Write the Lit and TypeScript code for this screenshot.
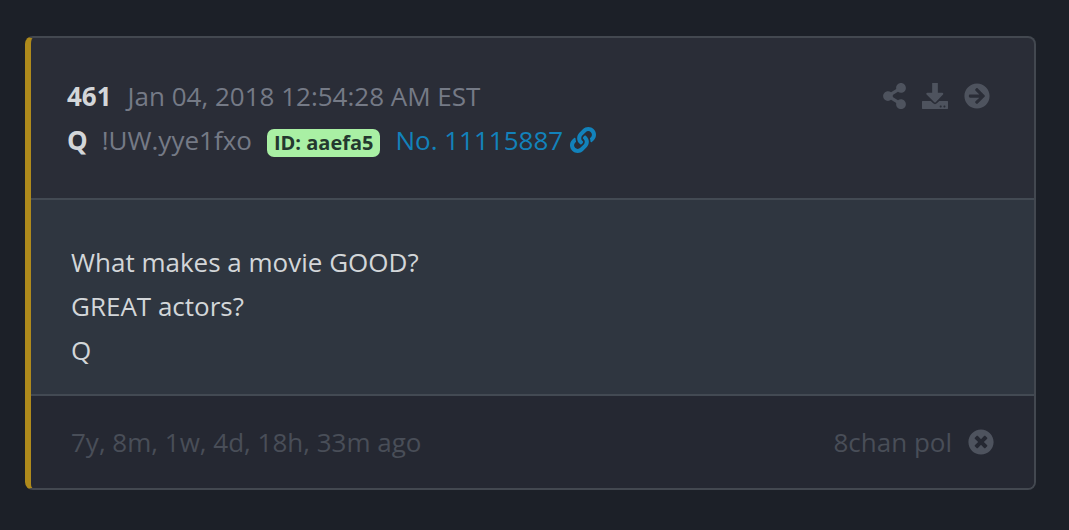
import { LitElement, html, css } from "lit";
import { customElement } from "lit/decorators.js";

@customElement("app-root")
export class AppRoot extends LitElement {
  static styles = css`
    :host {
      display: block;
      box-sizing: border-box;
      min-height: 100vh;
      padding: 36px 33px 40px 25px;
      background: #1c2028;
      font-family: "Open Sans", "Noto Sans", sans-serif;
      font-size: 26px;
      line-height: 44px;
      color: #d3d6d9;
    }
    .card {
      border: 2px solid #434850;
      border-left: 6px solid #ae8a1c;
      border-radius: 8px;
      overflow: hidden;
      background: #2a2d37;
    }
    header {
      display: flex;
      justify-content: space-between;
      padding: 36px 44px 36px 36px;
      border-bottom: 2px solid #434a53;
    }
    .row { display: flex; align-items: baseline; }
    .num { font-weight: 700; margin-right: 16px; }
    .name { font-weight: 700; margin-right: 14px; }
    .meta { color: #757a86; }
    .id {
      margin: 0 15px;
      padding: 0 7px;
      border-radius: 7px;
      background: #a9f0a4;
      color: #24382f;
      font-size: 20px;
      font-weight: 700;
      line-height: 28px;
    }
    a { color: #1282bb; text-decoration: none; display: flex; align-items: center; gap: 7px; }
    .tools { display: flex; gap: 16px; height: 44px; align-items: center; }
    button { display: flex; padding: 0; border: 0; background: none; color: #4e535e; }
    svg { fill: currentColor; display: block; }
    .body { padding: 40px 40px 22px; background: #2f3640; border-bottom: 2px solid #434a53; }
    p { margin: 0; }
    footer {
      display: flex;
      justify-content: space-between;
      padding: 24px 40px;
      background: #252832;
      color: #494e58;
    }
    .source { display: flex; align-items: center; gap: 16px; }
  `;

  render() {
    return html`
      <article class="card">
        <header>
          <div>
            <div class="row"><span class="num">461</span><time class="meta">Jan 04, 2018 12:54:28 AM EST</time></div>
            <div class="row">
              <span class="name">Q</span><span class="meta">!UW.yye1fxo</span><span class="id">ID: aaefa5</span>
              <a href="#11115887">No. 11115887
                <svg width="26" height="26" viewBox="0 0 512 512"><path d="M326.612 185.391c59.747 59.809 58.927 155.698.36 214.59-.11.12-.24.25-.36.37l-67.2 67.2c-59.27 59.27-155.699 59.262-214.96 0-59.27-59.26-59.27-155.7 0-214.96l37.106-37.106c9.84-9.84 26.786-3.3 27.294 10.606.648 17.722 3.826 35.527 9.69 52.721 1.986 5.822.567 12.262-3.783 16.612l-13.087 13.087c-28.026 28.026-28.905 73.66-1.155 101.96 28.024 28.579 74.086 28.749 102.325.51l67.2-67.19c28.191-28.191 28.073-73.757 0-101.83-3.701-3.694-7.429-6.564-10.341-8.569a16.037 16.037 0 0 1-6.947-12.606c-.396-10.567 3.348-21.456 11.698-29.806l21.054-21.055c5.521-5.521 14.182-6.199 20.584-1.731a152.482 152.482 0 0 1 20.522 17.197zM467.547 44.449c-59.261-59.262-155.69-59.27-214.96 0l-67.2 67.2c-.12.12-.25.25-.36.37-58.566 58.892-59.387 154.781.36 214.59a152.454 152.454 0 0 0 20.521 17.196c6.402 4.468 15.064 3.789 20.584-1.731l21.054-21.055c8.35-8.35 12.094-19.239 11.698-29.806a16.037 16.037 0 0 0-6.947-12.606c-2.912-2.005-6.64-4.875-10.341-8.569-28.073-28.073-28.191-73.639 0-101.83l67.2-67.19c28.239-28.239 74.3-28.069 102.325.51 27.75 28.3 26.872 73.934-1.155 101.96l-13.087 13.087c-4.35 4.35-5.769 10.79-3.783 16.612 5.864 17.194 9.042 34.999 9.69 52.721.509 13.906 17.454 20.446 27.294 10.606l37.106-37.106c59.271-59.259 59.271-155.699.001-214.959z"/></svg>
              </a>
            </div>
          </div>
          <div class="tools">
            <button aria-label="Share"><svg width="23" height="26" viewBox="0 0 448 512"><path d="M352 320c-22.608 0-43.387 7.819-59.79 20.895l-102.486-64.054a96.551 96.551 0 0 0 0-41.683l102.486-64.054C308.613 184.181 329.392 192 352 192c53.019 0 96-42.981 96-96S405.019 0 352 0s-96 42.981-96 96c0 7.158.79 14.13 2.276 20.841L155.79 180.895C139.387 167.819 118.608 160 96 160c-53.019 0-96 42.981-96 96s42.981 96 96 96c22.608 0 43.387-7.819 59.79-20.895l102.486 64.054A96.301 96.301 0 0 0 256 416c0 53.019 42.981 96 96 96s96-42.981 96-96-42.981-96-96-96z"/></svg></button>
            <button aria-label="Download"><svg width="26" height="26" viewBox="0 0 512 512"><path d="M200 0h112v192h87.700c17.800 0 26.700 21.500 14.100 34.100L269.700 378.300c-7.500 7.500-19.800 7.500-27.300 0L90.100 226.100c-12.600-12.600-3.700-34.100 14.100-34.100H200V0zm312 362v140c0 6-4 10-10 10H10c-6 0-10-4-10-10V362c0-6 4-10 10-10h160.700l49 49c20.100 20.100 52.500 20.100 72.600 0l49-49H502c6 0 10 4 10 10zm-124 102c0-11-9-20-20-20s-20 9-20 20 9 20 20 20 20-9 20-20zm74 0c0-11-9-20-20-20s-20 9-20 20 9 20 20 20 20-9 20-20z"/></svg></button>
            <button aria-label="Open"><svg width="26" height="26" viewBox="0 0 512 512"><path d="M256 8c137 0 248 111 248 248S393 504 256 504 8 393 8 256 119 8 256 8zm-28.900 143.600l75.500 72.400H120c-13.300 0-24 10.700-24 24v16c0 13.300 10.700 24 24 24h182.600l-75.500 72.400c-9.700 9.300-9.900 24.800-.4 34.300l11 10.900c9.400 9.400 24.600 9.400 33.900 0L404.300 273c9.400-9.400 9.400-24.600 0-33.900L271.600 106.300c-9.400-9.400-24.600-9.400-33.900 0l-11 10.900c-9.500 9.600-9.300 25.100.4 34.400z"/></svg></button>
          </div>
        </header>
        <section class="body"><p>What makes a movie GOOD?</p><p>GREAT actors?</p><p>Q</p></section>
        <footer>
          <time>7y, 8m, 1w, 4d, 18h, 33m ago</time>
          <div class="source"><span>8chan pol</span>
            <button aria-label="Close"><svg width="26" height="26" viewBox="0 0 512 512"><path d="M256 8C119 8 8 119 8 256s111 248 248 248 248-111 248-248S393 8 256 8zm121.600 313.100c4.700 4.700 4.700 12.300 0 17L338 377.600c-4.700 4.700-12.300 4.700-17 0L256 312l-65.100 65.600c-4.700 4.700-12.300 4.700-17 0L134.400 338c-4.700-4.700-4.700-12.300 0-17l65.600-65-65.600-65.100c-4.700-4.700-4.700-12.300 0-17l39.600-39.600c4.700-4.700 12.300-4.700 17 0l65 65.700 65.100-65.600c4.700-4.700 12.300-4.700 17 0l39.600 39.600c4.700 4.700 4.700 12.300 0 17L312 256l65.600 65.100z"/></svg></button>
          </div>
        </footer>
      </article>
    `;
  }
}
